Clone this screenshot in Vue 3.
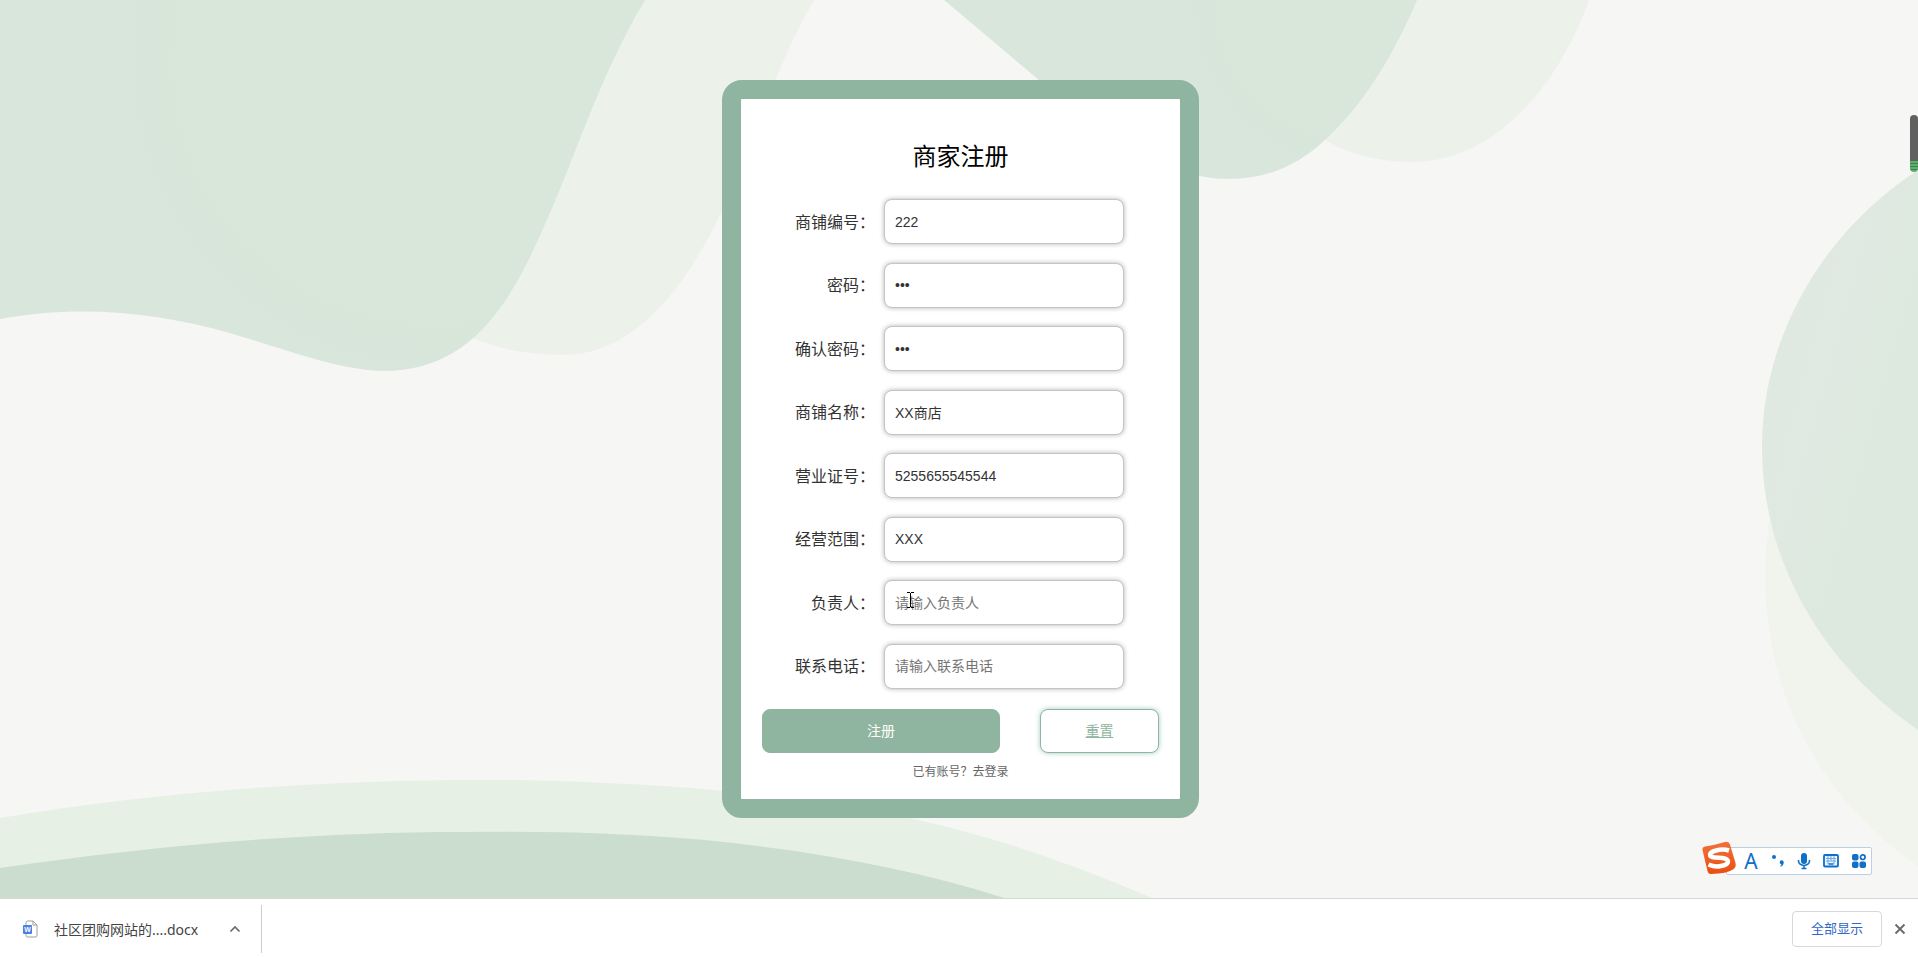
<script setup>
import { reactive } from 'vue'

const fields = reactive([
  { id: 'shop-no', label: '商铺编号', type: 'text', value: '222', hint: '请输入商铺编号' },
  { id: 'password', label: '密码', type: 'password', value: '222', hint: '请输入密码' },
  { id: 'confirm', label: '确认密码', type: 'password', value: '222', hint: '请输入确认密码' },
  { id: 'shop-name', label: '商铺名称', type: 'text', value: 'XX商店', hint: '请输入商铺名称' },
  { id: 'license', label: '营业证号', type: 'text', value: '5255655545544', hint: '请输入营业证号' },
  { id: 'scope', label: '经营范围', type: 'text', value: 'XXX', hint: '请输入经营范围' },
  { id: 'owner', label: '负责人', type: 'text', value: '', hint: '请输入负责人', pointer: true },
  { id: 'phone', label: '联系电话', type: 'text', value: '', hint: '请输入联系电话' },
])

function reset() {
  fields.forEach((f) => { f.value = '' })
}

const shapes = [
  { fill: '#ecf2ea', d: 'M814 0C771 75 760 132 719 217C677 304 625 355 563 355C530 355 500 350 471 337V0Z' },
  { fill: 'url(#mint-left)', d: 'M0 319C75 305 155 311 233 334C285 349 340 371 385 371C445 370 490 340 530 257C576 162 592 90 645 0H0Z' },
  { fill: '#ecf2ea', d: 'M1589 0C1555 95 1488 164 1408 162C1378 161 1350 155 1325 140V0Z' },
  { fill: 'url(#mint-top)', d: 'M944 0L1039 80C1110 141 1165 178 1229 179C1263 179 1295 168 1325 140C1366 102 1395 52 1417 0Z' },
  { fill: '#f0f4ed', d: 'M1769 521C1752 650 1794 780 1918 866V521Z' },
  { fill: 'url(#mint-right)', d: 'M1918 170C1823 232 1762 336 1762 447C1762 562 1823 665 1918 730Z' },
  { fill: '#e7f0e4', d: 'M0 818C165 790 340 779 508 780C650 782 790 793 909 818C1000 838 1075 865 1152 898H0Z' },
  { fill: '#cbddcf', d: 'M0 868C170 843 325 832 465 832C570 831 670 834 765 847C850 858 930 874 1004 898H0Z' },
]
</script>

<template>
  <div class="page">
    <main class="stage">
      <svg class="backdrop" viewBox="0 0 1918 898" preserveAspectRatio="none" aria-hidden="true">
        <defs>
          <radialGradient id="mint-left" gradientUnits="userSpaceOnUse" cx="440" cy="60" r="370">
            <stop offset="0.6" stop-color="#d8e7d9" />
            <stop offset="1" stop-color="#d8e6dc" />
          </radialGradient>
          <radialGradient id="mint-top" gradientUnits="userSpaceOnUse" cx="1360" cy="0" r="200">
            <stop offset="0.6" stop-color="#d8e7d9" />
            <stop offset="1" stop-color="#d8e6dc" />
          </radialGradient>
          <linearGradient id="mint-right" x1="0" y1="0" x2="1" y2="1">
            <stop offset="0.3" stop-color="#e0e8e2" />
            <stop offset="0.6" stop-color="#dde9df" />
          </linearGradient>
        </defs>
        <path v-for="(s, i) in shapes" :key="i" :d="s.d" :fill="s.fill" />
      </svg>

      <form class="card" @submit.prevent>
        <h1 class="title">商家注册</h1>
        <div class="fields">
          <div v-for="f in fields" :key="f.id" class="row">
            <label class="label" :for="f.id">{{ f.label }}：</label>
            <div class="control">
              <input
                :id="f.id"
                v-model="f.value"
                class="input"
                :type="f.type"
                :placeholder="f.hint"
                autocomplete="off"
              />
              <svg v-if="f.pointer" class="ibeam" width="7" height="16" viewBox="0 0 7 16" aria-hidden="true">
                <path d="M0 .5h3M4 .5h3M3.500 1v14M0 15.500h3M4 15.500h3" stroke="#000" fill="none" />
              </svg>
            </div>
          </div>
        </div>
        <div class="actions">
          <button class="submit" type="submit">注册</button>
          <button class="reset" type="button" @click="reset">重置</button>
        </div>
        <p class="login"><a href="#login">已有账号？去登录</a></p>
      </form>

      <div class="meter" aria-hidden="true"></div>

      <div class="ime">
        <svg class="ime-logo" width="36" height="34" viewBox="0 0 36 34" aria-hidden="true">
          <defs>
            <linearGradient id="ime-orange" x1="0" y1="0" x2="0" y2="1">
              <stop offset="0" stop-color="#f2713c" />
              <stop offset="1" stop-color="#ea4e10" />
            </linearGradient>
          </defs>
          <path d="M4 5.500Q14 4 24 1Q28 0 29 3.500L34.500 22Q35.500 26 32 28.500Q26 32.500 10 33Q7 33 6.500 30L1.500 9Q1 6 4 5.500Z" fill="url(#ime-orange)" />
          <path d="M28 9.500Q22 7.500 15 9.500C7 11.500 7.500 16 14 16.500L21.500 17C30 18 28 23.500 20 25Q14 26.500 7.500 23.500" fill="none" stroke="#fff" stroke-width="4.500" />
        </svg>
        <div class="ime-bar">
          <span class="ime-letter">A</span>
          <svg width="14" height="16" viewBox="0 0 14 16" aria-hidden="true">
            <circle cx="3" cy="4" r="2" fill="#0f6fc9" />
            <path d="M8.700 9.300a2 2 0 1 1 4 0c0 2.300-1 3.700-2.900 4.500l-.6-.9c.8-.5 1.200-1 1.300-1.700c-1.100 0-1.800-.8-1.800-1.900z" fill="#0f6fc9" />
          </svg>
          <svg width="14" height="18" viewBox="0 0 14 18" aria-hidden="true">
            <rect x="4" y="1" width="6" height="11" rx="3" fill="#0f6fc9" />
            <path d="M1.500 8v1a5.500 4.500 0 0 0 11 0V8M7 13v3M4.500 16.500h5" fill="none" stroke="#0f6fc9" stroke-width="1.600" />
          </svg>
          <svg width="16" height="14" viewBox="0 0 16 14" aria-hidden="true">
            <rect x="1" y="1" width="14" height="11.500" rx="1" fill="#eef5fc" stroke="#0f6fc9" stroke-width="1.800" />
            <path d="M3 4.500h10M3 7h10M5 2v5M8 2v5M11 2v5M5 7v3M11 7v3" stroke="#6ea8de" />
            <path d="M5.500 10h5" stroke="#0f6fc9" stroke-width="1.500" />
          </svg>
          <svg width="16" height="16" viewBox="0 0 16 16" fill="#0f6fc9" aria-hidden="true">
            <rect x="1" y="1" width="6.500" height="6.500" rx="2" />
            <rect x="1" y="8.500" width="6.500" height="6.500" rx="2" />
            <rect x="8.500" y="8.500" width="6.500" height="6.500" rx="2" />
            <circle cx="11.800" cy="4.200" r="2.300" fill="#fff" stroke="#0f6fc9" stroke-width="1.700" />
          </svg>
        </div>
      </div>
    </main>

    <footer class="downloads">
      <button class="file" type="button">
        <svg width="16" height="18" viewBox="0 0 16 18" aria-hidden="true">
          <path d="M3 5V2.500Q3 1 4.500 1H10l4 4v10.500q0 1.500-1.500 1.500h-8Q3 17 3 15.500V13" fill="#fff" stroke="#9a9da1" />
          <path d="M10 1v4h4" fill="none" stroke="#9a9da1" />
          <rect x="0" y="5" width="9" height="9" rx="1" fill="#4a80de" />
          <text x="4.500" y="12" text-anchor="middle" class="file-letter">W</text>
        </svg>
        <span>社区团购网站的....docx</span>
      </button>
      <button class="icon-btn" type="button" aria-label="更多操作">
        <svg width="12" height="8" viewBox="0 0 12 8"><path d="M1.500 6.500L6 2l4.500 4.500" fill="none" stroke="#6b6b6b" stroke-width="1.700" /></svg>
      </button>
      <span class="divider"></span>
      <button class="show-all" type="button">全部显示</button>
      <button class="icon-btn" type="button" aria-label="关闭">
        <svg width="12" height="12" viewBox="0 0 12 12"><path d="M1.500 1.500l9 9M10.500 1.500l-9 9" fill="none" stroke="#6b6b6b" stroke-width="1.900" /></svg>
      </button>
    </footer>
  </div>
</template>

<style>
body {
  margin: 0;
}
</style>

<style scoped>
.page {
  display: flex;
  flex-direction: column;
  min-height: 100vh;
  font-family: "Noto Sans CJK SC", "Noto Sans", sans-serif;
  color: #333;
  background: #f6f6f4;
}
.page *,
.page {
  box-sizing: border-box;
}
button {
  padding: 0;
  border: 0;
  background: none;
  font-family: inherit;
  color: inherit;
}
.stage {
  position: relative;
  flex: 1;
  display: flex;
  justify-content: center;
  align-items: center;
  padding-left: 3px;
}
.backdrop {
  position: absolute;
  inset: 0;
  width: 100%;
  height: 100%;
}
.card {
  position: relative;
  display: flex;
  flex-direction: column;
  width: 477px;
  min-height: calc(100vh - 220px);
  padding: 40px 21px 18px;
  border: 19px solid #8fb5a0;
  border-radius: 20px;
  background: #fff;
}
.title {
  margin: 0 0 28px;
  font-size: 24px;
  line-height: 32px;
  font-weight: 400;
  text-align: center;
  color: #000;
}
.fields {
  flex: 1;
  display: flex;
  flex-direction: column;
  justify-content: space-between;
  padding-right: 35px;
}
.row {
  display: flex;
  align-items: center;
  gap: 9px;
}
.label {
  flex: 1;
  padding-bottom: 2px;
  font-size: 16px;
  line-height: 24px;
  text-align: right;
}
.control {
  position: relative;
  width: 240px;
}
.input {
  display: block;
  width: 100%;
  height: 45px;
  padding: 0 10px;
  border: 1px solid #c4c4c4;
  border-radius: 8px;
  outline: 0;
  background: #fff;
  box-shadow: 0 0 5px rgba(0, 0, 0, 0.3);
  font-family: "Liberation Sans", "Noto Sans CJK SC", sans-serif;
  font-size: 14px;
  color: #333;
}
.input::placeholder {
  color: #757575;
}
.ibeam {
  position: absolute;
  left: 23px;
  top: 12px;
}
.actions {
  display: grid;
  grid-template-columns: 2fr 1fr;
  gap: 40px;
  margin-top: 20px;
}
.submit,
.reset {
  height: 44px;
  padding-bottom: 3px;
  border: 1px solid #8fb5a0;
  border-radius: 8px;
  font-size: 14px;
}
.submit {
  background: #8fb5a0;
  color: #fff;
}
.reset {
  background: #fff;
  box-shadow: 0 0 5px rgba(64, 158, 120, 0.5);
  color: #8fb5a0;
  text-decoration: underline;
}
.login {
  margin: 8px 0 0;
  font-size: 12px;
  line-height: 20px;
  text-align: center;
}
.login a {
  color: #666;
  text-decoration: none;
}
.meter {
  position: absolute;
  right: 0;
  top: 115px;
  width: 8px;
  height: 57px;
  border-radius: 4px;
  background:
    repeating-linear-gradient(#58b368 0 2px, #4c7a55 2px 3px) bottom / 100% 11px no-repeat,
    #606060;
}
.ime {
  position: absolute;
  right: 46px;
  bottom: 23px;
  display: flex;
  align-items: flex-end;
}
.ime-logo {
  position: relative;
  margin-right: -11px;
}
.ime-bar {
  display: flex;
  align-items: center;
  justify-content: space-between;
  width: 146px;
  height: 28px;
  padding: 0 4px 0 16px;
  border: 1px solid #bccfe6;
  border-radius: 2px;
  background: #fff;
}
.ime-letter {
  width: 16px;
  font-family: "Noto Sans", sans-serif;
  font-size: 21px;
  line-height: 26px;
  color: #0f6fc9;
  text-align: center;
}
.downloads {
  display: flex;
  align-items: center;
  height: 60px;
  padding: 0 12px 0 23px;
  border-top: 1px solid #d6d8d6;
  background: #fff;
}
.file {
  display: flex;
  align-items: center;
  gap: 15px;
  font-family: "Noto Sans", "Noto Sans CJK SC", sans-serif;
  font-size: 14px;
  color: #444;
}
.file-letter {
  font: 700 7px "Liberation Sans", sans-serif;
  fill: #fff;
}
.icon-btn {
  display: flex;
  margin-left: 31px;
}
.divider {
  width: 1px;
  height: 48px;
  margin-left: 20px;
  background: #ccc;
}
.show-all {
  width: 90px;
  height: 36px;
  margin-left: auto;
  padding-bottom: 2px;
  border: 1px solid #d5d8dc;
  border-radius: 4px;
  font-size: 13px;
  color: #3367c6;
}
.show-all + .icon-btn {
  margin-left: 12px;
}
</style>
